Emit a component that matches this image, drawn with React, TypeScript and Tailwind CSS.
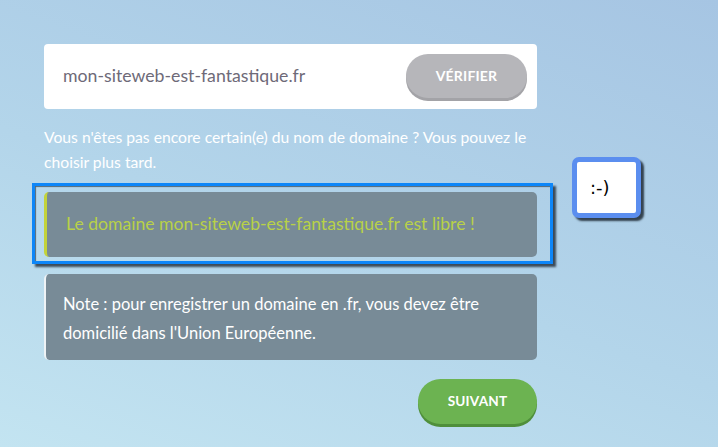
import React from "react";

export default function App() {
  return (
    <div
      className="w-[718px] h-[447px] overflow-hidden flex items-start pl-[44px] pt-[44px]"
      style={{ background: "linear-gradient(200deg, #a6c5e3 0%, #b3d5ea 55%, #c3e4f1 100%)", fontFamily: "Lato, 'Open Sans', sans-serif" }}
    >
      <div className="w-[493px] flex flex-col">
        <div className="h-[65px] bg-white rounded-[4px] flex items-center justify-between pl-[19px] pr-[10px]">
          <span className="text-[17.7px] text-[#6e6a78]">mon-siteweb-est-fantastique.fr</span>
          <button className="w-[121px] h-[44px] rounded-full bg-[#b6b6ba] shadow-[0_3px_0_#a3a3a7] text-white text-[14px] font-bold tracking-[0.2px] mb-[2px]">
            VÉRIFIER
          </button>
        </div>
        <p className="mt-[16px] text-[15.7px] leading-[25px] text-white">
          Vous n'êtes pas encore certain(e) du nom de domaine ? Vous pouvez le choisir plus tard.
        </p>
        <div className="mt-[8px] -ml-[12px] w-[521px] border-[3px] border-[#0d86f8] shadow-[3px_3px_2px_rgba(20,30,40,0.75),inset_1px_1px_1px_rgba(20,30,40,0.6)] pl-[9px] pr-[13px] pt-[6px] pb-[4px]">
          <div className="h-[65px] bg-[#788b97] rounded-[5px] border-l-[3px] border-[#c3d33a] flex items-center pl-[19px]">
            <span className="text-[17.6px] text-[#b8d148]">Le domaine mon-siteweb-est-fantastique.fr est libre !</span>
          </div>
        </div>
        <div className="mt-[10px] h-[86px] bg-[#788b97] rounded-[5px] border-l-[2px] border-[#eef3f6] flex flex-col justify-center pl-[17px] pr-[10px] pt-[4px]">
          <p className="text-[16.5px] leading-[29px] text-white">
            Note : pour enregistrer un domaine en .fr, vous devez être domicilié dans l'Union Européenne.
          </p>
        </div>
        <div className="mt-[19px] flex justify-end">
          <button className="w-[119px] h-[45px] rounded-full bg-[#6cb351] shadow-[0_3px_0_#4f8f3b] text-white text-[13.6px] font-bold tracking-[0.2px]">
            SUIVANT
          </button>
        </div>
      </div>
      <div className="ml-[35px] mt-[113px] w-[69px] h-[61px] rounded-[7px] border-[5px] border-[#5b8eef] bg-white shadow-[3px_3px_2px_rgba(20,30,40,0.8)] flex items-center pl-[13px]">
        <span className="text-[18px] text-black" style={{ fontFamily: "'DejaVu Sans', sans-serif" }}>:-)</span>
      </div>
    </div>
  );
}
